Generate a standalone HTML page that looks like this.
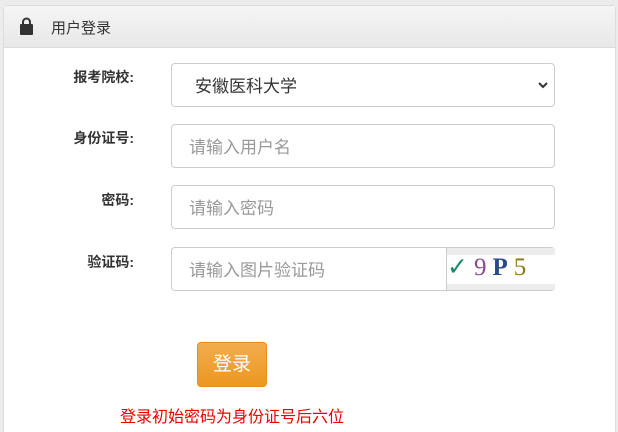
<!DOCTYPE html>
<html><head><meta charset="utf-8"><style>
html,body{margin:0;width:618px;height:432px;overflow:hidden}
body{background:#ececec;font-family:"Liberation Sans","Noto Sans CJK SC",sans-serif;position:relative}
.panel{position:absolute;left:3px;top:5px;width:611px;height:430px;background:#fff;border:1px solid #ddd;border-radius:4px 4px 0 0}
.hd{height:41px;background:linear-gradient(#f5f5f5,#e8e8e8);border-bottom:1px solid #ddd;position:relative}
.hd span{position:absolute;left:47px;top:11px;font-size:15px;color:#333}
.lbl{position:absolute;width:134px;text-align:right;font-size:14px;font-weight:bold;color:#333}
.in{position:absolute;left:171px;width:384px;height:44px;box-sizing:border-box;border:1px solid #ccc;border-radius:4px;background:#fff;font-size:17px;color:#999;padding:8px 0 0 17px}
</style></head><body>
<div class="panel">
<div class="hd">
<svg style="position:absolute;left:15px;top:11px" width="15" height="18" viewBox="0 0 15 18"><path d="M4 8V5a3.5 3.5 0 0 1 7 0v3" stroke="#333" stroke-width="2" fill="none"/><rect x="1" y="7" width="13" height="11" rx="1" fill="#333"/></svg>
<span>用户登录</span></div>
</div>
<div class="lbl" style="top:67px">报考院校:</div>
<div class="lbl" style="top:128px">身份证号:</div>
<div class="lbl" style="top:190px">密码:</div>
<div class="lbl" style="top:252px">验证码:</div>
<div class="in" style="top:63px;color:#333;padding-left:23px">安徽医科大学<svg style="position:absolute;right:6px;top:17px" width="10" height="8" viewBox="0 0 10 8"><path d="M1 2l4 4 4-4" stroke="#333" stroke-width="2" fill="none"/></svg></div>
<div class="in" style="top:124px">请输入用户名</div>
<div class="in" style="top:185px">请输入密码</div>
<div class="in" style="top:247px">请输入图片验证码</div>
<div style="position:absolute;left:446px;top:248px;width:108px;height:42px;border-left:1px solid #ccc;background:linear-gradient(#ececec 0,#ececec 7px,#fff 7px,#fff 36px,#ececec 36px)">
<div style="position:absolute;left:0;top:4px;font-size:25px;font-family:'Liberation Serif',serif;letter-spacing:6px"><span style="color:#1a8a6a">✓</span><span style="color:#8a4a8a">9</span><span style="color:#2a4a8a;font-weight:bold">P</span><span style="color:#8a7a10">5</span></div></div>
<div style="position:absolute;left:197px;top:342px;width:70px;height:45px;border-radius:4px;background:linear-gradient(#f2ad4e,#ec971f);border:1px solid #e0901c;box-sizing:border-box;color:#fff;font-size:19px;text-align:center;line-height:43px">登录</div>
<div style="position:absolute;left:120px;top:403px;font-size:16px;color:#e00">登录初始密码为身份证号后六位</div>
</body></html>
